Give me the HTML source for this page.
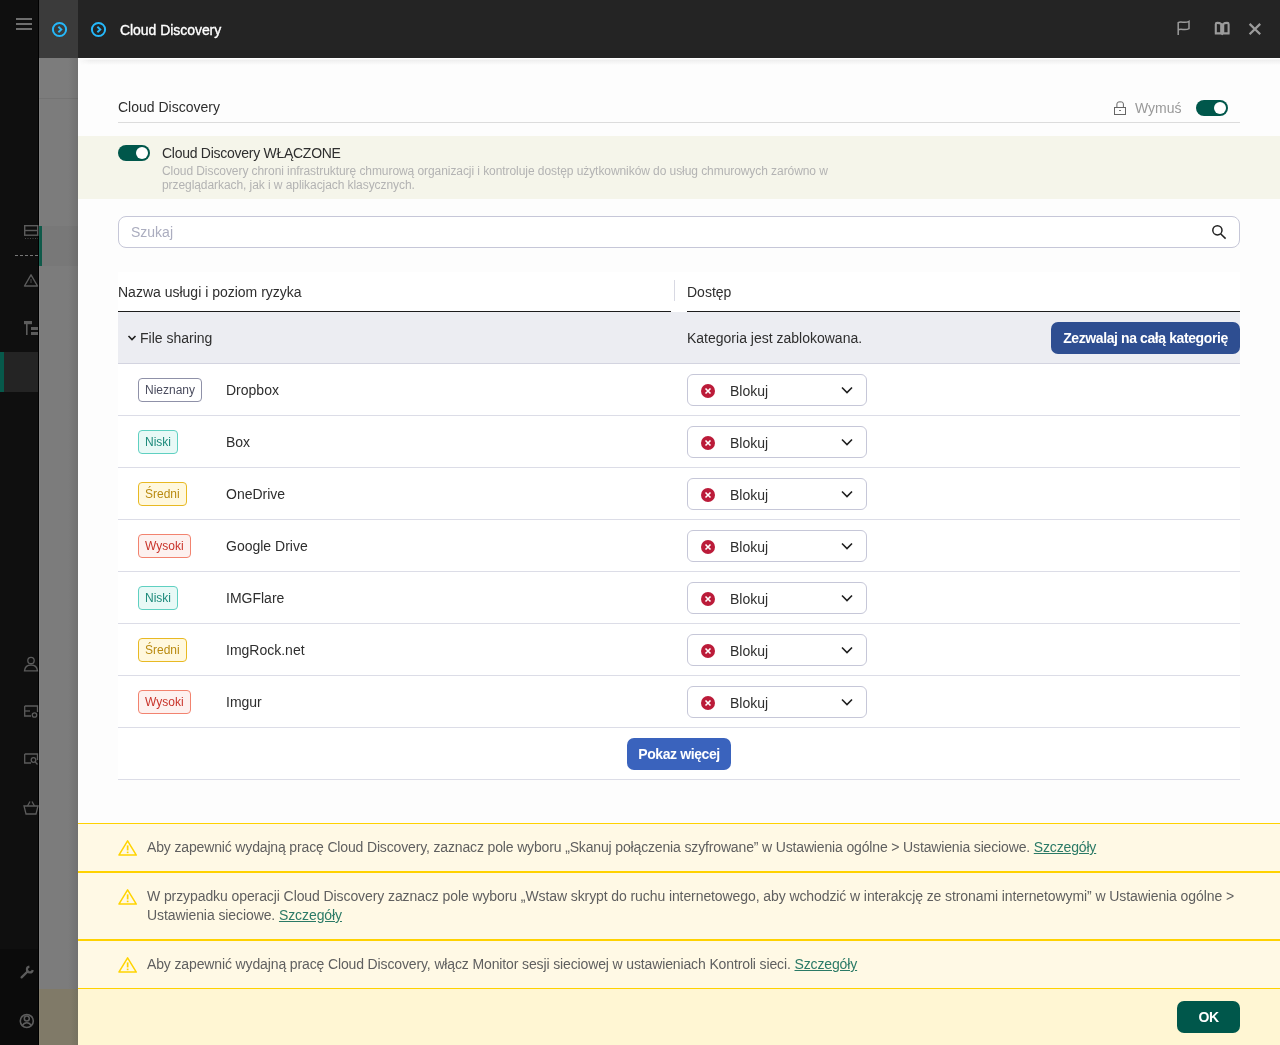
<!DOCTYPE html>
<html><head><meta charset="utf-8">
<style>
*{box-sizing:border-box;margin:0;padding:0}
html,body{width:1280px;height:1045px;overflow:hidden;background:#fcfcfc;font-family:"Liberation Sans",sans-serif;color:#2e2e2e}
.t,.wt,.bd,.btn{will-change:transform}
.a{position:absolute}
.t{position:absolute;white-space:nowrap;font-size:14px;line-height:20px}
#sb{left:0;top:0;width:39px;height:1045px;background:#0f0f0f;border-right:1px solid #000}
#gc{left:39px;top:58px;width:39px;height:987px;background:linear-gradient(to right,#7c7c7c 0,#7c7c7c 75%,#717171 100%)}
#gch{left:39px;top:0;width:39px;height:58px;background:#3b3b3b}
#hd{left:78px;top:0;width:1202px;height:58px;background:#242424}
#modal{left:78px;top:58px;width:1202px;height:987px;background:#fdfdfd}
.shadow{left:78px;top:58px;width:1202px;height:7px;background:linear-gradient(#ffffff 0,#ffffff 14%,#eeeeee 30%,rgba(253,253,253,0) 100%);-webkit-mask-image:linear-gradient(to right,transparent 0,#000 12px)}
.bd{left:138px;height:24px;padding:0 6px;border:1px solid;border-radius:4px;font-size:12px;line-height:22px;white-space:nowrap}
.nz{border-color:#8f91a8;color:#4b4d5f;background:#fff}
.ni{border-color:#5fd0c1;color:#1d8a7b;background:#e8f9f6}
.sr{border-color:#e8b923;color:#b98a10;background:#fff8de}
.wy{border-color:#f2836f;color:#c9342b;background:#fdf1ef}
.dd{left:687px;width:180px;height:32px;border:1px solid #c6c7d8;border-radius:6px;background:#fff}
.ln{left:118px;width:1122px;height:1px;background:#dcdde7}
.btn{position:absolute;color:#fff;font-weight:bold;font-size:14px;letter-spacing:-0.4px;text-align:center;border-radius:7px;line-height:32px;height:32px;white-space:nowrap}
.warn{left:78px;width:1202px;background:#fff9e5;border-top:1px solid #ffd200;border-bottom:1px solid #ffd200}
.wt{position:absolute;left:146.5px;font-size:14px;line-height:19px;color:#5f5f5f;letter-spacing:-0.15px}
.wt a{color:#2b7a66;text-decoration:underline}
</style></head>
<body>
<!-- sidebar -->
<div id="sb" class="a"></div>
<div id="gch" class="a"></div>
<div id="gc" class="a"></div>
<div class="a" style="left:0;top:949px;width:38px;height:96px;background:#0b0b0b"></div>
<div class="a" style="left:4px;top:352px;width:34px;height:40px;background:#242424"></div>
<div class="a" style="left:0;top:352px;width:4px;height:40px;background:#07594b"></div>
<div class="a" style="left:39px;top:226px;width:3px;height:40px;background:#0f5a4a"></div>
<div class="a" style="left:42px;top:226px;width:36px;height:40px;background:rgba(0,0,0,0.03)"></div>
<div class="a" style="left:39px;top:98px;width:39px;height:1px;background:rgba(0,0,0,0.07)"></div>
<div class="a" style="left:39px;top:989px;width:39px;height:56px;background:linear-gradient(to right,#807a68 0,#807a68 80%,#767260 100%)"></div>
<div class="a" style="left:39px;top:58px;width:1px;height:987px;background:rgba(255,255,255,0.05)"></div>
<div id="hd" class="a"></div>
<div id="modal" class="a"></div>
<div class="a shadow"></div>

<!-- header -->
<svg class="a" style="left:51px;top:21px" width="17" height="17" viewBox="0 0 17 17"><circle cx="8.5" cy="8.5" r="6.6" fill="none" stroke="#25b8fa" stroke-width="2"/><path d="M7.4 5.8 L10.3 8.5 L7.4 11.2" fill="none" stroke="#25b8fa" stroke-width="1.9"/></svg>
<svg class="a" style="left:90px;top:21px" width="17" height="17" viewBox="0 0 17 17"><circle cx="8.5" cy="8.5" r="6.6" fill="none" stroke="#25b8fa" stroke-width="2"/><path d="M7.4 5.8 L10.3 8.5 L7.4 11.2" fill="none" stroke="#25b8fa" stroke-width="1.9"/></svg>
<div class="t" style="left:120px;top:20px;color:#fff;font-size:14px;-webkit-text-stroke:0.35px #fff;letter-spacing:-0.05px">Cloud Discovery</div>

<!-- section title -->
<div class="t" style="left:118px;top:97px">Cloud Discovery</div>
<div class="a" style="left:118px;top:122px;width:1122px;height:1px;background:#dcdcdc"></div>
<div class="t" style="left:1135px;top:98px;color:#999">Wymuś</div>
<div class="a" style="left:1196px;top:100px;width:32px;height:16px;border-radius:8px;background:#00574b"></div>
<div class="a" style="left:1214px;top:102px;width:12px;height:12px;border-radius:6px;background:#fff"></div>

<!-- banner -->
<div class="a" style="left:78px;top:136px;width:1202px;height:63px;background:#f5f5ea"></div>
<div class="a" style="left:118px;top:145px;width:32px;height:16px;border-radius:8px;background:#00574b"></div>
<div class="a" style="left:136px;top:147px;width:12px;height:12px;border-radius:6px;background:#fff"></div>
<div class="t" style="left:162px;top:143px;letter-spacing:-0.27px">Cloud Discovery WŁĄCZONE</div>
<div class="t" style="left:162px;top:164px;font-size:12px;line-height:14px;color:#b3b3b3;letter-spacing:-0.07px">Cloud Discovery chroni infrastrukturę chmurową organizacji i kontroluje dostęp użytkowników do usług chmurowych zarówno w<br>przeglądarkach, jak i w aplikacjach klasycznych.</div>

<!-- search -->
<div class="a" style="left:118px;top:216px;width:1122px;height:32px;border:1px solid #c6c7d8;border-radius:8px;background:#fff"></div>
<div class="t" style="left:131px;top:222px;color:#abadbf">Szukaj</div>

<!-- table -->
<div class="a" style="left:118px;top:272px;width:1122px;height:508px;background:#fff"></div>
<div class="t" style="left:118px;top:282px">Nazwa usługi i poziom ryzyka</div>
<div class="t" style="left:687px;top:282px">Dostęp</div>
<div class="a" style="left:674px;top:280px;width:1px;height:21px;background:#d8d9e3"></div>
<div class="a" style="left:118px;top:311px;width:553px;height:1px;background:#1d1d1d"></div>
<div class="a" style="left:687px;top:311px;width:553px;height:1px;background:#1d1d1d"></div>

<div class="a" style="left:118px;top:312px;width:1122px;height:51px;background:#ecedf2"></div>
<div class="a" style="left:118px;top:363px;width:1122px;height:1px;background:#d3d4e0"></div>


<svg class="a" style="left:127px;top:334px" width="10" height="8" viewBox="0 0 10 8"><path d="M1.5 2L5 5.5L8.5 2" fill="none" stroke="#1f1f1f" stroke-width="1.6"/></svg>
<div class="t" style="left:140px;top:328px">File sharing</div>
<div class="t" style="left:687px;top:328px">Kategoria jest zablokowana.</div>
<div class="btn" style="left:1051px;top:322px;width:189px;background:#2e4e91">Zezwalaj na całą kategorię</div>
<div class="a bd nz" style="top:378px">Nieznany</div>
<div class="t" style="left:226px;top:380px">Dropbox</div>
<div class="a dd" style="top:374px"><svg class="a" style="left:13px;top:9px" width="14" height="14" viewBox="0 0 14 14"><circle cx="7" cy="7" r="7" fill="#bb1b39"/><path d="M4.5 4.5L9.5 9.5M9.5 4.5L4.5 9.5" stroke="#fff" stroke-width="1.6"/></svg><span class="t" style="left:42px;top:6px">Blokuj</span><svg class="a" style="left:153px;top:11px" width="12" height="8" viewBox="0 0 12 8"><path d="M1 1.5L6 6.5L11 1.5" fill="none" stroke="#1f1f1f" stroke-width="1.6"/></svg></div>
<div class="a ln" style="top:415px"></div>
<div class="a bd ni" style="top:430px">Niski</div>
<div class="t" style="left:226px;top:432px">Box</div>
<div class="a dd" style="top:426px"><svg class="a" style="left:13px;top:9px" width="14" height="14" viewBox="0 0 14 14"><circle cx="7" cy="7" r="7" fill="#bb1b39"/><path d="M4.5 4.5L9.5 9.5M9.5 4.5L4.5 9.5" stroke="#fff" stroke-width="1.6"/></svg><span class="t" style="left:42px;top:6px">Blokuj</span><svg class="a" style="left:153px;top:11px" width="12" height="8" viewBox="0 0 12 8"><path d="M1 1.5L6 6.5L11 1.5" fill="none" stroke="#1f1f1f" stroke-width="1.6"/></svg></div>
<div class="a ln" style="top:467px"></div>
<div class="a bd sr" style="top:482px">Średni</div>
<div class="t" style="left:226px;top:484px">OneDrive</div>
<div class="a dd" style="top:478px"><svg class="a" style="left:13px;top:9px" width="14" height="14" viewBox="0 0 14 14"><circle cx="7" cy="7" r="7" fill="#bb1b39"/><path d="M4.5 4.5L9.5 9.5M9.5 4.5L4.5 9.5" stroke="#fff" stroke-width="1.6"/></svg><span class="t" style="left:42px;top:6px">Blokuj</span><svg class="a" style="left:153px;top:11px" width="12" height="8" viewBox="0 0 12 8"><path d="M1 1.5L6 6.5L11 1.5" fill="none" stroke="#1f1f1f" stroke-width="1.6"/></svg></div>
<div class="a ln" style="top:519px"></div>
<div class="a bd wy" style="top:534px">Wysoki</div>
<div class="t" style="left:226px;top:536px">Google Drive</div>
<div class="a dd" style="top:530px"><svg class="a" style="left:13px;top:9px" width="14" height="14" viewBox="0 0 14 14"><circle cx="7" cy="7" r="7" fill="#bb1b39"/><path d="M4.5 4.5L9.5 9.5M9.5 4.5L4.5 9.5" stroke="#fff" stroke-width="1.6"/></svg><span class="t" style="left:42px;top:6px">Blokuj</span><svg class="a" style="left:153px;top:11px" width="12" height="8" viewBox="0 0 12 8"><path d="M1 1.5L6 6.5L11 1.5" fill="none" stroke="#1f1f1f" stroke-width="1.6"/></svg></div>
<div class="a ln" style="top:571px"></div>
<div class="a bd ni" style="top:586px">Niski</div>
<div class="t" style="left:226px;top:588px">IMGFlare</div>
<div class="a dd" style="top:582px"><svg class="a" style="left:13px;top:9px" width="14" height="14" viewBox="0 0 14 14"><circle cx="7" cy="7" r="7" fill="#bb1b39"/><path d="M4.5 4.5L9.5 9.5M9.5 4.5L4.5 9.5" stroke="#fff" stroke-width="1.6"/></svg><span class="t" style="left:42px;top:6px">Blokuj</span><svg class="a" style="left:153px;top:11px" width="12" height="8" viewBox="0 0 12 8"><path d="M1 1.5L6 6.5L11 1.5" fill="none" stroke="#1f1f1f" stroke-width="1.6"/></svg></div>
<div class="a ln" style="top:623px"></div>
<div class="a bd sr" style="top:638px">Średni</div>
<div class="t" style="left:226px;top:640px">ImgRock.net</div>
<div class="a dd" style="top:634px"><svg class="a" style="left:13px;top:9px" width="14" height="14" viewBox="0 0 14 14"><circle cx="7" cy="7" r="7" fill="#bb1b39"/><path d="M4.5 4.5L9.5 9.5M9.5 4.5L4.5 9.5" stroke="#fff" stroke-width="1.6"/></svg><span class="t" style="left:42px;top:6px">Blokuj</span><svg class="a" style="left:153px;top:11px" width="12" height="8" viewBox="0 0 12 8"><path d="M1 1.5L6 6.5L11 1.5" fill="none" stroke="#1f1f1f" stroke-width="1.6"/></svg></div>
<div class="a ln" style="top:675px"></div>
<div class="a bd wy" style="top:690px">Wysoki</div>
<div class="t" style="left:226px;top:692px">Imgur</div>
<div class="a dd" style="top:686px"><svg class="a" style="left:13px;top:9px" width="14" height="14" viewBox="0 0 14 14"><circle cx="7" cy="7" r="7" fill="#bb1b39"/><path d="M4.5 4.5L9.5 9.5M9.5 4.5L4.5 9.5" stroke="#fff" stroke-width="1.6"/></svg><span class="t" style="left:42px;top:6px">Blokuj</span><svg class="a" style="left:153px;top:11px" width="12" height="8" viewBox="0 0 12 8"><path d="M1 1.5L6 6.5L11 1.5" fill="none" stroke="#1f1f1f" stroke-width="1.6"/></svg></div>
<div class="a ln" style="top:727px"></div>
<div class="btn" style="left:627px;top:738px;width:104px;background:#3a63bd">Pokaz więcej</div>
<div class="a ln" style="top:779px"></div>

<!-- warnings -->
<div class="a warn" style="top:823px;height:49px"></div>
<div class="a warn" style="top:872px;height:68px"></div>
<div class="a warn" style="top:940px;height:49px"></div>
<div class="a" style="left:78px;top:989px;width:1202px;height:56px;background:#fff6d3"></div>
<div class="wt" style="top:838px">Aby zapewnić wydajną pracę Cloud Discovery, zaznacz pole wyboru „Skanuj połączenia szyfrowane” w Ustawienia ogólne &gt; Ustawienia sieciowe. <a>Szczegóły</a></div>
<div class="wt" style="top:887px;letter-spacing:-0.09px">W przypadku operacji Cloud Discovery zaznacz pole wyboru „Wstaw skrypt do ruchu internetowego, aby wchodzić w interakcję ze stronami internetowymi” w Ustawienia ogólne &gt;<br>Ustawienia sieciowe. <a>Szczegóły</a></div>
<div class="wt" style="top:955px;letter-spacing:-0.13px">Aby zapewnić wydajną pracę Cloud Discovery, włącz Monitor sesji sieciowej w ustawieniach Kontroli sieci. <a>Szczegóły</a></div>
<div class="btn" style="left:1177px;top:1001px;width:63px;background:#00574b">OK</div>

<!-- page-level icon layer -->
<svg class="a" style="left:0;top:0" width="1280" height="1045" viewBox="0 0 1280 1045">
 <!-- hamburger -->
 <g fill="#6e6e6e"><rect x="16" y="18" width="16" height="2"/><rect x="16" y="23" width="16" height="2"/><rect x="16" y="28" width="16" height="2"/></g>
 <!-- sidebar icons -->
 <g fill="none" stroke="#5c5c5c" stroke-width="1.4">
  <rect x="24.7" y="225.7" width="13" height="9.5"/>
  <line x1="24.7" y1="230.5" x2="37.7" y2="230.5"/>
 </g>
 <line x1="25" y1="238.5" x2="38" y2="238.5" stroke="#4a4a4a" stroke-width="1" stroke-dasharray="1 1.5"/>
 <line x1="15" y1="255.5" x2="38" y2="255.5" stroke="#777" stroke-width="1" stroke-dasharray="3 2"/>
 <path d="M31 274.8 L37.5 286 L24.5 286 Z" fill="none" stroke="#5c5c5c" stroke-width="1.4" stroke-linejoin="round"/>
 <line x1="31" y1="279" x2="31" y2="283" stroke="#4a4a4a" stroke-width="1"/>
 <g fill="#5c5c5c">
  <rect x="24" y="321" width="8" height="3.2"/>
  <rect x="26" y="324" width="1.6" height="11"/>
  <rect x="31" y="327" width="7" height="3"/>
  <rect x="31" y="332" width="7" height="3"/>
 </g>
 <g fill="none" stroke="#5c5c5c" stroke-width="1.3">
  <circle cx="31" cy="660.5" r="3.2"/>
  <path d="M24.5 670.8 C25 666.5 28 665 31 665 C34 665 37 666.5 37.5 670.8 Z"/>
  <path d="M24.7 706 H37.5 V712 M24.7 706 V716 H31"/>
  <line x1="24.7" y1="711" x2="30" y2="711"/>
  <circle cx="34.5" cy="715" r="2.2"/>
  <path d="M24.7 754 H37.5 V760 M24.7 754 V763 H31"/>
  <circle cx="33.5" cy="760" r="2.3"/><line x1="35.2" y1="761.8" x2="37.5" y2="764.5"/>
  <path d="M24 806 H38 L36 814 H26 Z"/>
  <path d="M27.5 806 L30 801.5 M34.5 806 L32 801.5"/>
  <circle cx="26.8" cy="1021" r="6.5" stroke-width="1.6"/>
  <circle cx="26.8" cy="1018.6" r="2.5" stroke-width="1.5"/>
  <path d="M22.2 1025.8 C23.5 1023.5 25 1022.8 26.8 1022.8 C28.6 1022.8 30.1 1023.5 31.4 1025.8" stroke-width="1.5"/>
 </g>
 <g fill="#5c5c5c"><rect x="28" y="709" width="0" height="0"/></g>
 <path d="M21.6 977.4 L27.8 971.2" stroke="#5c5c5c" stroke-width="2.3" stroke-linecap="round"/>
 <path d="M29.4 966.7 A2.9 2.9 0 1 0 32.7 970" fill="none" stroke="#5c5c5c" stroke-width="2.2"/>
 <!-- header icons -->
 <g fill="none" stroke="#9b9b9b">
  <path d="M1178.2 35 V22.6 C1181.5 20.6 1184.5 24 1189 21.4 V28.6 C1184.5 31.2 1181.5 27.8 1178.2 29.9" stroke-width="1.5"/>
  <path d="M1215.8 33.2 V24.2 Q1215.8 22.9 1217.2 22.9 Q1219.9 22.9 1221.2 24 V33.2 M1228.6 33.2 V24.2 Q1228.6 22.9 1227.2 22.9 Q1224.5 22.9 1223.2 24 V33.2 M1214.8 33.4 H1221 L1222.2 34 L1223.4 33.4 H1229.6" stroke-width="2.1"/>
  <path d="M1249.6 23.9 L1260.2 34.2 M1260.2 23.9 L1249.6 34.2" stroke-width="2.3"/>
 </g>
 <!-- lock -->
 <g fill="none" stroke="#666" stroke-width="1">
  <rect x="1114.5" y="107.5" width="11" height="7"/>
  <path d="M1116.9 107.5 V104 Q1116.9 101.9 1119 101.9 H1121.3 Q1123.4 101.9 1123.4 104 V107.5"/>
 </g>
 <rect x="1119" y="110" width="2" height="1" fill="#777"/>
 <!-- search -->
 <circle cx="1217.4" cy="230.3" r="4.6" fill="none" stroke="#222" stroke-width="1.5"/>
 <line x1="1220.6" y1="233.7" x2="1225.6" y2="238.6" stroke="#222" stroke-width="1.5"/>
 <!-- warning triangles -->
 <g id="wtri">
 <path d="M118.9 855.1 L127.6 840.9 L136.3 855.1 Z" fill="none" stroke="#ffd400" stroke-width="1.5" stroke-linejoin="round"/>
 <rect x="126.8" y="845.4" width="1.7" height="5" fill="#ffd400"/>
 <rect x="126.8" y="851.6" width="1.7" height="1.6" fill="#ffd400"/>
 </g>
 <use href="#wtri" y="49"/>
 <use href="#wtri" y="117"/>
</svg>
</body></html>
